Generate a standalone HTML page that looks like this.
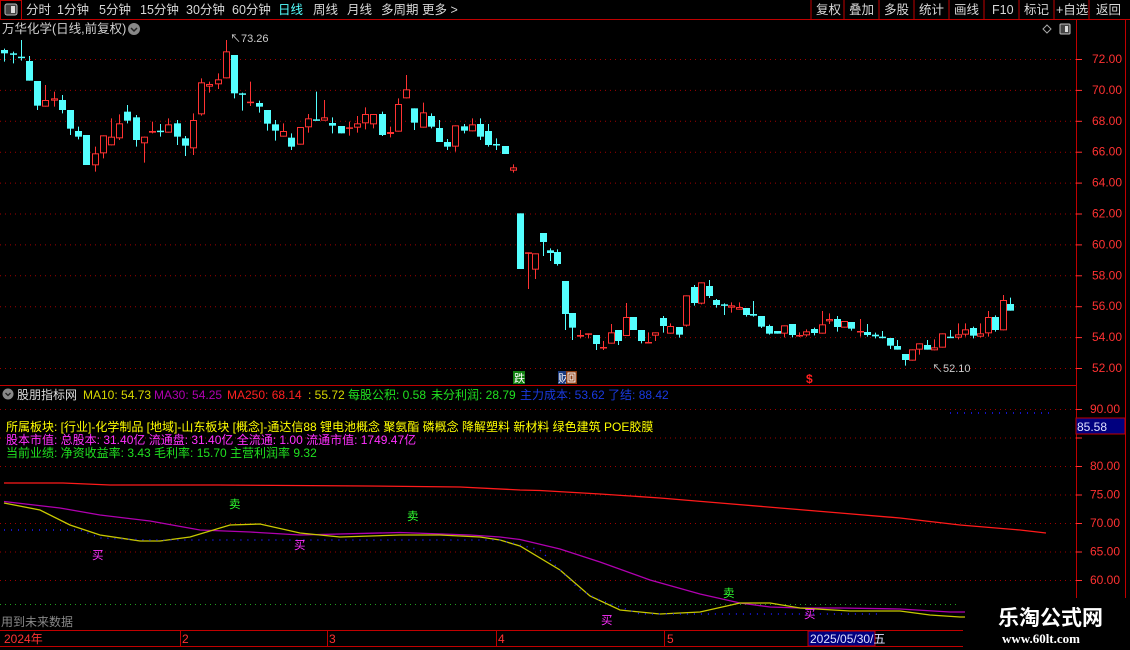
<!DOCTYPE html>
<html><head><meta charset="utf-8"><style>
html,body{margin:0;padding:0;background:#000;width:1130px;height:650px;overflow:hidden}
svg{display:block;font-family:"Liberation Sans","Noto Sans CJK SC",sans-serif}
</style></head><body>
<svg id="s" width="1130" height="650" viewBox="0 0 1130 650" xmlns="http://www.w3.org/2000/svg">
<rect width="1130" height="650" fill="#000"/>
<!-- top toolbar -->
<line x1="0" y1="19.5" x2="1130" y2="19.5" stroke="#c00000"/>
<rect x="0.5" y="0.5" width="21" height="19" fill="none" stroke="#c00000"/>
<rect x="5" y="4" width="12" height="11" rx="2" fill="#444" stroke="#bbb"/>
<rect x="11" y="6" width="4" height="7" fill="#ddd"/>
<g font-size="12.5" fill="#d8d8d8">
<text x="26" y="14">分时</text><text x="57" y="14">1分钟</text><text x="99" y="14">5分钟</text><text x="140" y="14">15分钟</text><text x="186" y="14">30分钟</text><text x="232" y="14">60分钟</text>
<text x="278" y="14" fill="#54ffff">日线</text><text x="313" y="14">周线</text><text x="347" y="14">月线</text><text x="381" y="14">多周期</text><text x="422" y="14">更多 &gt;</text>
<text x="816" y="14">复权</text><text x="849" y="14">叠加</text><text x="884" y="14">多股</text><text x="919" y="14">统计</text><text x="954" y="14">画线</text><text x="992" y="14">F10</text><text x="1024" y="14">标记</text><text x="1056" y="14">+自选</text><text x="1096" y="14">返回</text>
</g>
<g stroke="#c00000"><line x1="811" y1="0" x2="811" y2="19"/><line x1="844" y1="0" x2="844" y2="19"/><line x1="879" y1="0" x2="879" y2="19"/><line x1="914" y1="0" x2="914" y2="19"/><line x1="949" y1="0" x2="949" y2="19"/><line x1="984" y1="0" x2="984" y2="19"/><line x1="1019" y1="0" x2="1019" y2="19"/><line x1="1054" y1="0" x2="1054" y2="19"/><line x1="1089" y1="0" x2="1089" y2="19"/>
<line x1="1076.5" y1="19" x2="1076.5" y2="631"/><line x1="1125.5" y1="19" x2="1125.5" y2="600"/></g>
<text x="2" y="33" font-size="12.5" fill="#d0d0d0">万华化学(日线,前复权)</text>
<circle cx="134" cy="29" r="6" fill="#888"/><path d="M131 28l3 3 3-3" stroke="#222" stroke-width="1.5" fill="none"/>
<path d="M1047 25l4 4-4 4-4-4z" fill="none" stroke="#aaa"/>
<rect x="1060" y="24" width="10" height="10" rx="1" fill="#444" stroke="#bbb"/><rect x="1065" y="26" width="3" height="6" fill="#ddd"/>
<g id="grid" stroke="#a00000" stroke-dasharray="1 4"></g>
<g id="ax" font-size="12" fill="#ff3232"></g>
<g id="cd"></g>
<text x="230" y="42" font-size="11" fill="#ccc">↖73.26</text>
<text x="932" y="372" font-size="11" fill="#ccc">↖52.10</text>
<rect x="513" y="371" width="12" height="13" fill="#108010"/><text x="514" y="382" font-size="11" fill="#fff">跌</text>
<rect x="558" y="371" width="8" height="13" fill="#1a3a80"/><text x="558" y="382" font-size="11" fill="#fff">财</text>
<rect x="566" y="371" width="11" height="13" fill="#8a3a10"/><rect x="568" y="373" width="7" height="9" fill="none" stroke="#fff"/><rect x="570" y="375" width="3" height="5" fill="none" stroke="#fff"/>
<text x="806" y="383" font-size="12" fill="#ff2020" font-weight="bold">$</text>
<line x1="0" y1="385.5" x2="1076" y2="385.5" stroke="#c00000"/>
<!-- lower header -->
<circle cx="8" cy="394" r="5.5" fill="#888"/><path d="M5.5 393l2.5 2.5 2.5-2.5" stroke="#222" stroke-width="1.3" fill="none"/>
<g font-size="12">
<text x="17" y="399" fill="#ddd">股朋指标网</text>
<text x="83" y="399" fill="#d8d800">MA10: 54.73</text>
<text x="154" y="399" fill="#b000b0">MA30: 54.25</text>
<text x="227" y="399" fill="#ff2020">MA250: 68.14</text>
<text x="308" y="399" fill="#d8d800">: 55.72</text>
<text x="348" y="399" fill="#20e020">每股公积: 0.58</text>
<text x="431" y="399" fill="#20e020">未分利润: 28.79</text>
<text x="520" y="399" fill="#1a3ae0">主力成本: 53.62 了结: 88.42</text>
<text x="6" y="431" fill="#ffff00">所属板块: [行业]-化学制品 [地域]-山东板块 [概念]-通达信88 锂电池概念 聚氨酯 磷概念 降解塑料 新材料 绿色建筑 POE胶膜</text>
<text x="6" y="444" fill="#ff30ff">股本市值: 总股本: 31.40亿 流通盘: 31.40亿 全流通: 1.00 流通市值: 1749.47亿</text>
<text x="6" y="457" fill="#20e020">当前业绩: 净资收益率: 3.43 毛利率: 15.70 主营利润率 9.32</text>
</g>
<g id="low" fill="none"></g>
<rect x="1076" y="418" width="49" height="16" fill="#00007f" stroke="#c00000"/>
<text x="1077" y="431" font-size="12" fill="#e0e0ff">85.58</text>
<g font-size="11.5">
<text x="92" y="559" fill="#ff30ff">买</text><text x="294" y="549" fill="#ff30ff">买</text><text x="601" y="624" fill="#ff30ff">买</text><text x="804" y="618" fill="#ff30ff">买</text>
<text x="229" y="508" fill="#30ff30">卖</text><text x="407" y="520" fill="#30ff30">卖</text><text x="723" y="597" fill="#30ff30">卖</text>
</g>
<text x="1" y="626" font-size="12" fill="#888">用到未来数据</text>
<!-- date bar -->
<line x1="0" y1="630.5" x2="963" y2="630.5" stroke="#c00000"/>
<line x1="0" y1="646.5" x2="963" y2="646.5" stroke="#c00000"/>
<g stroke="#c00000"><line x1="180.5" y1="630" x2="180.5" y2="646"/><line x1="327.5" y1="630" x2="327.5" y2="646"/><line x1="496.5" y1="630" x2="496.5" y2="646"/><line x1="664.5" y1="630" x2="664.5" y2="646"/></g>
<g font-size="12" fill="#ff3232"><text x="4" y="643">2024年</text><text x="182" y="643">2</text><text x="329" y="643">3</text><text x="498" y="643">4</text><text x="667" y="643">5</text></g>
<rect x="808" y="631" width="67" height="15" fill="#00007f" stroke="#c00000"/>
<text x="810" y="643" font-size="12" fill="#e0e0ff">2025/05/30/五</text>
<rect x="965" y="598" width="165" height="52" fill="#000"/>
<text x="998" y="625" font-size="21" font-weight="bold" fill="#fff">乐淘公式网</text>
<text x="1002" y="643" font-size="13" font-weight="bold" fill="#fff" font-family="Liberation Serif,serif">www.60lt.com</text>
</svg>
<script>
var NS="http://www.w3.org/2000/svg";
function el(p,t,a){var e=document.createElementNS(NS,t);for(var k in a)e.setAttribute(k,a[k]);p.appendChild(e);return e;}
var g=document.getElementById('grid'),ax=document.getElementById('ax');
for(var i=0;i<11;i++){var y=59+i*30.9;el(g,'line',{x1:0,x2:1076,y1:y+.5,y2:y+.5});
 var t=el(ax,'text',{x:1092,y:y+4});t.textContent=(72-2*i).toFixed(2);
 el(ax,'line',{x1:1076,x2:1082,y1:y+.5,y2:y+.5,stroke:'#ff3232'});}
var lv=[90,85,80,75,70,65,60];
for(var i=0;i<7;i++){var y=409+i*28.5;el(g,'line',{x1:0,x2:1076,y1:y+.5,y2:y+.5});
 if(i!=1){var t=el(ax,'text',{x:1090,y:y+4});t.textContent=lv[i].toFixed(2);}
 el(ax,'line',{x1:1076,x2:1082,y1:y+.5,y2:y+.5,stroke:'#ff3232'});}
el(g,'line',{x1:0,x2:960,y1:604.5,y2:604.5,stroke:'#20a020'});
var A=[[1,60,70,56,95],[1,70,73,65,100],[1,80,83,30,92],[1,93,152,78,152],[1,153,227,153,240],[0,210,230,165,230],[0,205,212,185,230],[1,210,240,195,250],[1,240,296,240,315],[1,303,320,290,328],[1,315,405,315,405],[0,370,406,350,425],[0,316,370,316,385],[0,320,346,265,346],[0,280,325,253,330],[1,245,272,225,280],[1,262,330,255,350],[0,320,340,320,398],[0,303,308,275,310],[1,302,306,282,320],[0,283,308,265,308],[1,280,320,270,345],[1,325,347,318,378],[0,270,355,250,375],[0,157,253,145,257],[0,162,170,155,188],[0,148,163,130,177],[0,64,145,30,145],[1,75,190,75,205],[1,190,193,188,242],[0,215,218,155,228],[1,219,230,212,248],[1,240,281,240,302],[1,283,302,270,332],[0,303,320,280,320],[1,323,350,310,360],[0,291,344,291,344],[0,265,292,252,308],[1,268,271,185,272],[0,262,272,210,272],[1,279,287,262,310],[1,288,310,288,310],[0,292,296,275,317],[0,280,293,258,308],[0,252,280,232,298],[0,252,283,252,295],[1,252,315,245,318],[0,306,312,290,322],[0,222,305,205,305],[0,178,205,135,205],[1,235,278,235,300],[0,247,293,218,293],[1,258,290,250,295],[1,294,336,270,336],[1,336,350,327,360],[0,286,350,286,365],[1,289,302,282,310],[0,283,304,265,304],[1,282,320,265,330],[1,303,345,282,350],[1,342,346,325,360],[1,348,372,348,372],[0,412,422,403,428]];
var B=[[60,1,40,207,40,207],[83,0,157,160,157,267],[105,0,160,209,160,237],[128,1,99,126,99,168],[150,1,151,159,145,183],[172,1,156,192,148,197],[195,1,243,342,243,390],[217,1,339,383,339,420],[240,0,405,410,390,415],[264,0,400,404,400,415],[287,1,405,432,405,450],[310,0,441,444,423,450],[332,0,397,431,372,431],[354,1,390,423,390,435],[377,0,351,408,309,408],[399,1,351,390,351,390],[422,1,390,423,390,430],[443,0,426,429,397,430],[466,0,397,407,397,423],[489,1,354,378,348,398],[511,0,378,401,370,401],[536,1,381,404,381,413],[558,0,286,377,286,380],[581,1,261,309,255,317],[603,0,247,311,247,313],[626,1,258,288,240,294],[648,1,300,315,297,323],[671,1,313,316,310,345],[693,0,316,323,307,338],[716,0,321,329,307,329],[738,1,324,345,324,350],[760,1,342,347,303,350],[783,1,348,380,348,384],[808,1,378,401,374,404],[830,1,393,401,393,401],[853,0,376,401,376,412],[875,1,372,405,372,412],[897,0,405,409,397,411],[919,0,394,406,388,410],[942,1,387,399,383,406],[965,0,373,401,333,401],[987,0,357,364,340,372],[1010,1,357,381,348,395],[1032,0,363,383,363,383],[1054,1,366,386,366,392],[1079,0,393,397,357,410],[1101,1,396,405,372,410],[1124,1,404,409,398,415],[1146,1,410,413,393,415],[1169,1,414,437,414,447],[1191,1,438,449,420,449],[1214,1,462,480,462,497],[1236,0,448,482,448,482],[1258,0,430,449,430,464],[1280,1,435,449,420,449],[1303,0,442,451,418,451],[1326,0,400,443,400,443],[1350,1,410,413,390,413],[1373,0,403,413,370,418],[1395,0,388,404,370,410],[1418,1,384,407,380,415],[1440,0,400,410,370,412],[1463,0,351,400,333,410],[1486,1,351,390,346,395],[1508,0,300,391,285,391],[1530,1,312,332,293,332]];
var cd=document.getElementById('cd');
function candle(x,c,t,b,h,l){var col=c?'#54ffff':'#ff3232';x=Math.round(x);
 el(cd,'line',{x1:x+.5,x2:x+.5,y1:h,y2:l,stroke:col});
 if(b-t<1.5){el(cd,'rect',{x:x-3,y:t,width:7,height:1.5,fill:col});return;}
 if(c)el(cd,'rect',{x:x-3,y:t,width:7,height:b-t,fill:col});
 else el(cd,'rect',{x:x-2.5,y:t+.5,width:6,height:b-t-1,fill:'#000',stroke:col});}
A.forEach(function(d,i){candle((13+24.6*i)/3,d[0],30+d[1]/3,30+d[2]/3,30+d[3]/3,30+d[4]/3);});
B.forEach(function(d){candle(500+d[0]/3,d[1],200+d[2]/3,200+d[3]/3,200+d[4]/3,200+d[5]/3);});
var low=document.getElementById('low');
function pl(p,c){el(low,'polyline',{points:p,stroke:c,'stroke-width':1.3,fill:'none'});}
pl("4,483 63,483 110,485 218,485 368,486 460,487 520,490 540,490.5 600,494 660,498 720,503 780,508 840,513 900,518 960,525 1020,530 1046,533","#ff1a1a");
pl("4,501.5 60,508 100,515 150,521 200,530 250,532 300,535 400,532.5 470,535 500,537 520,539.5 560,549 600,562 650,580 700,594 740,603 770,607 800,608 840,608 900,609 950,612 975,612","#b000b0");
pl("4,503 40,510 70,525 100,535 140,541 160,541 190,537 230,525 260,524 300,533 340,537 400,535 440,535 480,537 500,540 520,546 560,570 590,596 620,610 660,614 700,612 740,603 770,603 800,608 850,611 900,611 930,615 960,617 975,617","#c8c800");
pl("4,530 80,530 100,538 150,540 500,540 540,550 580,590 600,600 640,614 880,614","#1a1aff");
low.lastChild.setAttribute('stroke-dasharray','1 6');low.lastChild.setAttribute('stroke-width','1.5');
el(low,'line',{x1:950,x2:1050,y1:413,y2:413,stroke:'#1a1aff','stroke-dasharray':'1 6','stroke-width':1.5});
</script>
</body></html>
